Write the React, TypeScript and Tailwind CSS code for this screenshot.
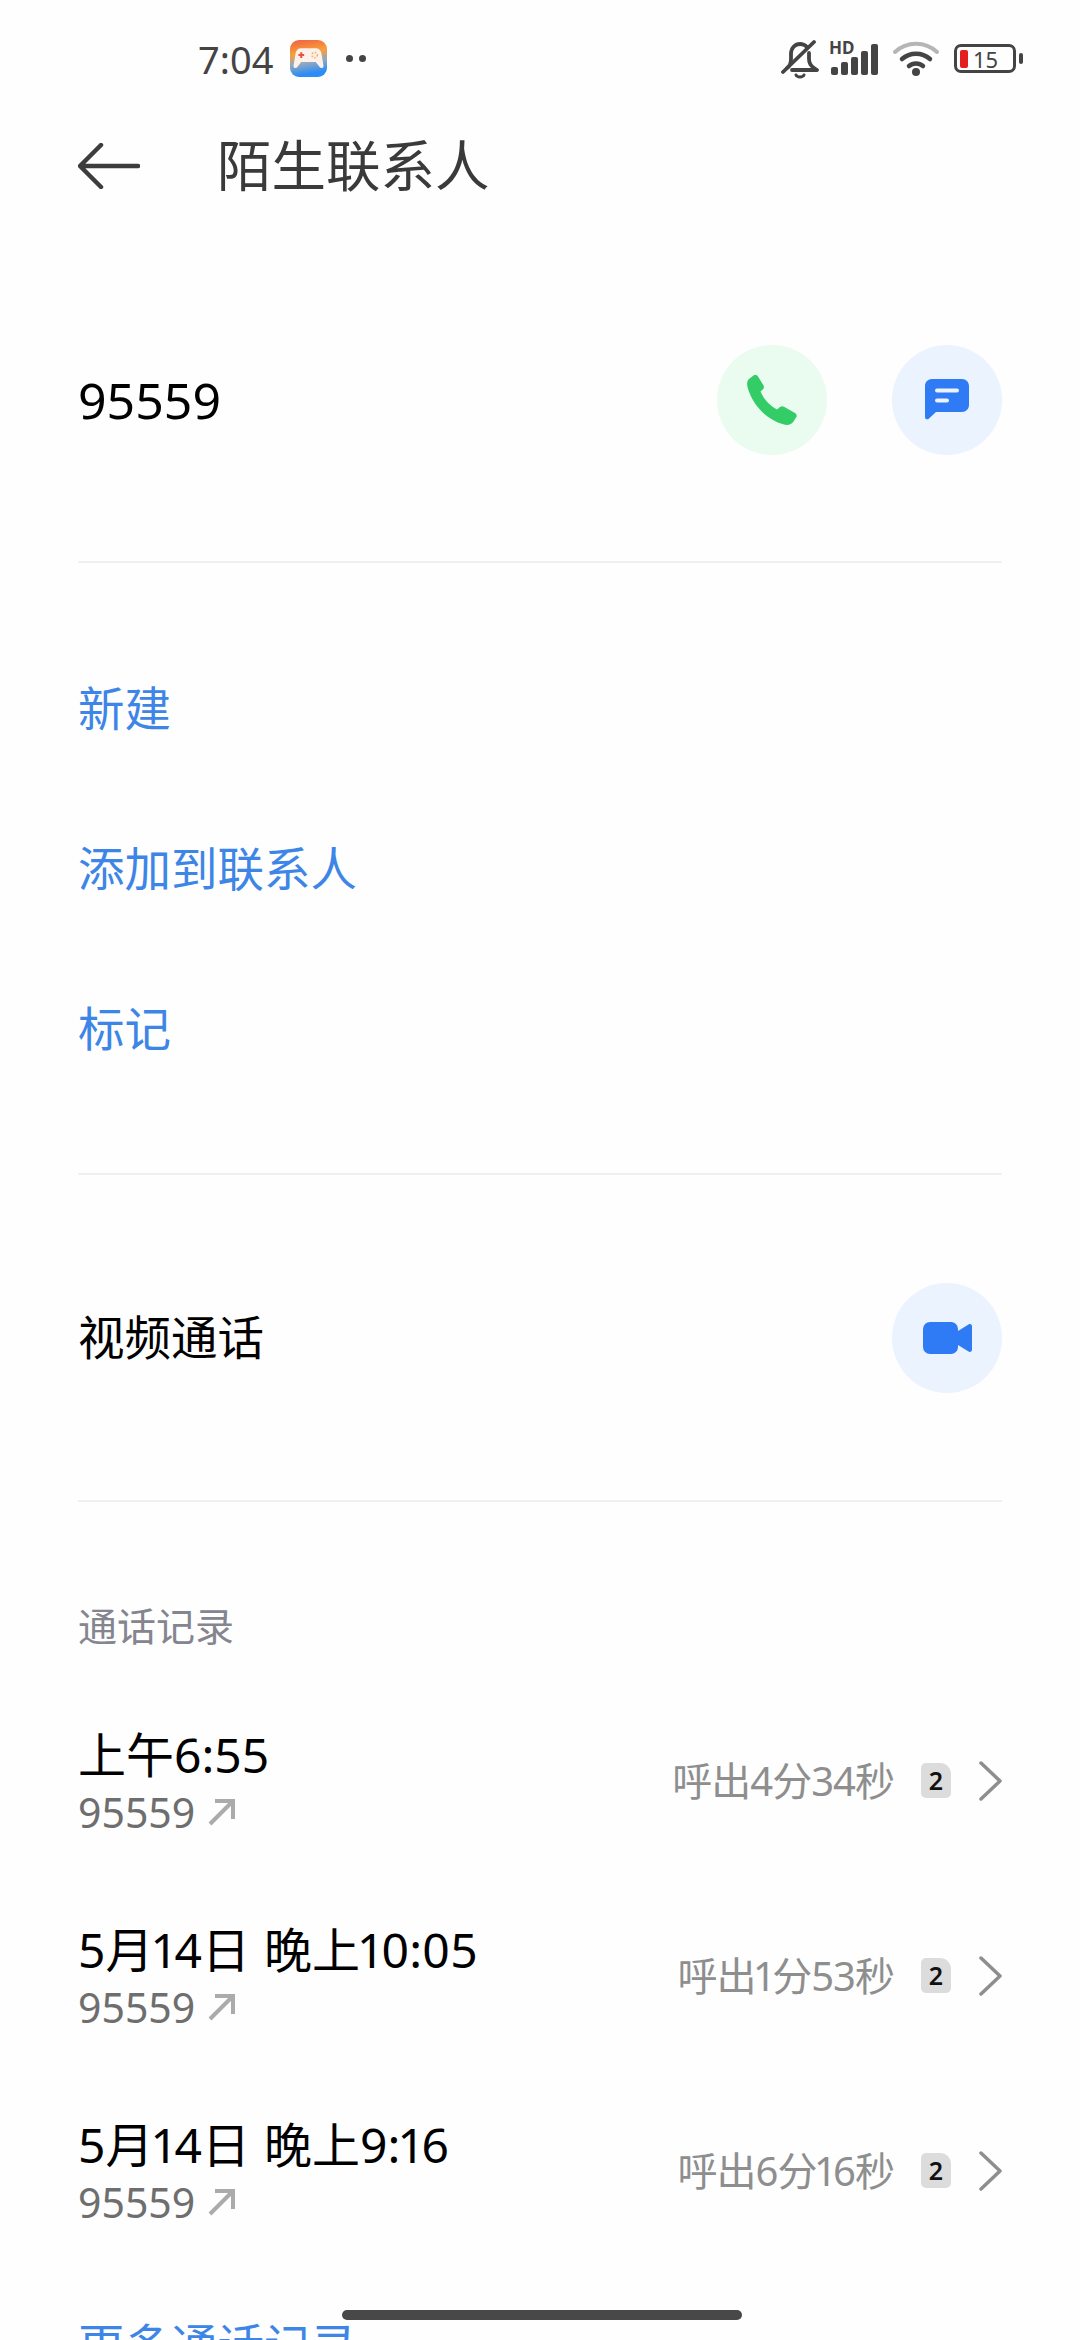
const font = { fontFamily: '"Noto Sans", "Noto Sans CJK SC", sans-serif' };

const calls = [
  { time: '上午6:55', detail: '呼出4分34秒' },
  { time: '5月14日 晚上10:05', detail: '呼出1分53秒' },
  { time: '5月14日 晚上9:16', detail: '呼出6分16秒' },
];

function GameIcon() {
  return (
    <div className="flex h-[37px] w-[37px] items-center justify-center rounded-[9px] bg-[linear-gradient(170deg,#ee5f40_0%,#f9a03c_35%,#8fa8c0_60%,#2b8df5_85%)]">
      <svg width="31" height="25" viewBox="0 0 30 24">
        <path d="M8 2h14c3 0 5 2 5.500 5l2 12c.3 2-2 3-3.500 1.500L22 15.500H8l-4 5C2.500 22 .2 21 .5 19l2-12C3 4 5 2 8 2z" fill="#fdf1ec" />
        <path d="M8 6v5.500M5.200 8.700h5.600" stroke="#e8543f" strokeWidth="2" />
        <circle cx="21" cy="8.700" r="2.600" fill="none" stroke="#f5b45c" strokeWidth="1.600" strokeDasharray="1.500 1.500" />
      </svg>
    </div>
  );
}

function StatusIcons() {
  return (
    <div className="flex items-center">
      <svg width="38" height="40" viewBox="0 0 38 40" fill="none" stroke="#444" strokeWidth="3.800" strokeLinecap="round" strokeLinejoin="round">
        <path d="M6 29c3-2 4-5 4-9v-5c0-6 4-10 9-10 3 0 5 1 7 3M28 14v6c0 4 2 7 5 9l3 2H11" />
        <path d="M2 33 33 3" />
        <path d="M15 36c1 2.500 7 2.500 8 0" strokeWidth="3" />
      </svg>
      <div className="relative ml-[11px] h-[34px] w-[49px]">
        <span className="absolute left-[-1px] top-[-5px] text-[17px] font-bold leading-[22px] text-[#444]">HD</span>
        <svg className="absolute left-0 top-0" width="49" height="34" viewBox="0 0 49 34" fill="#444">
          <rect x="1" y="25" width="7" height="8" rx="2" />
          <rect x="11" y="20" width="7" height="13" rx="2" />
          <rect x="21" y="15" width="7" height="18" rx="2" />
          <rect x="31" y="9" width="7" height="24" rx="2" />
          <rect x="41" y="2" width="7" height="31" rx="2" />
        </svg>
      </div>
      <svg className="ml-[14px]" width="46" height="36" viewBox="0 0 46 36" fill="none" strokeLinecap="round">
        <path d="M2 11c12-11 30-11 42 0" stroke="#b5b5b5" strokeWidth="4" />
        <path d="M9 18c8-7 20-7 28 0" stroke="#444" strokeWidth="4.500" />
        <path d="M16 25c4-3.500 10-3.500 14 0" stroke="#444" strokeWidth="4.500" />
        <circle cx="23" cy="31" r="4" fill="#444" />
      </svg>
      <div className="ml-[15px] flex items-center">
        <div className="flex h-[29px] w-[62px] items-center rounded-[7px] border-[3px] border-[#444] pl-[3px]">
          <div className="h-[18px] w-[8px] rounded-[2px] bg-[#e3201f]" />
          <span className="ml-[5px] text-[22px] leading-none text-[#444]">15</span>
        </div>
        <div className="ml-[3px] h-[11px] w-[4px] rounded-[2px] bg-[#444]" />
      </div>
    </div>
  );
}

function PhoneIcon() {
  return (
    <svg width="50" height="50" viewBox="0 0 50 50">
      <path d="M2 4 6.500.5C8-.3 10 0 11 1.500L16.500 10.500C17.300 12 17 13.500 15.800 14.500L13.500 16.500C16 23 23 31 30 34.500L33 32C34.200 31 35.500 31 37 31.700L48 38C49.800 39 50.200 41 49 42.500L46.500 46.500C44.500 49.500 41 50.500 37 49.500C19 45 5 29 .5 12-.2 9 0 6 2 4Z" fill="#33cc66" />
    </svg>
  );
}

function MessageIcon() {
  return (
    <svg width="44" height="41" viewBox="0 0 44 41">
      <path d="M7 0h30c4 0 7 3 7 7v19c0 4-3 7-7 7H11L4 39.500C2.500 41 0 40.500 0 38V7c0-4 3-7 7-7z" fill="#2f7bf5" />
      <rect x="10" y="9.500" width="24" height="4" rx="2" fill="#ecf3fe" />
      <rect x="10" y="19.500" width="14" height="4" rx="2" fill="#ecf3fe" />
    </svg>
  );
}

function VideoIcon() {
  return (
    <svg width="49" height="32" viewBox="0 0 49 32">
      <rect x="0" y="0" width="35" height="32" rx="7" fill="#2f7bf5" />
      <path d="M35 9 45.500 2.500C47 1.500 49 2.500 49 4v24c0 1.500-2 2.500-3.500 1.500L35 23z" fill="#2f7bf5" />
    </svg>
  );
}

function CircleButton({ tone, children }: { tone: string; children: React.ReactNode }) {
  return (
    <div className={`flex h-[110px] w-[110px] items-center justify-center rounded-full ${tone}`}>
      {children}
    </div>
  );
}

function CallRow({ time, detail }: { time: string; detail: string }) {
  return (
    <div className="flex h-[195px] items-center justify-between">
      <div>
        <div className="text-[48px] leading-[62px] text-black proportional-nums [word-spacing:1.500px]">{time}</div>
        <div className="mt-[1px] flex items-center text-[41px] leading-[50px] text-[#6e6e6e]">
          95559
          <svg className="ml-[12px]" width="30" height="30" viewBox="0 0 30 30" fill="none" stroke="#ababab" strokeWidth="4">
            <path d="M3 27 26 4M8 4h18v18" />
          </svg>
        </div>
      </div>
      <div className="flex items-center">
        <span className="text-[40px] tracking-[-1px] text-[#8e8e8e] proportional-nums">{detail}</span>
        <div className="ml-[27px] flex h-[35px] w-[30px] items-center justify-center rounded-[5px] rounded-tr-[11px] bg-[#dcdcdc] text-[25px] font-semibold text-[#111]">
          2
        </div>
        <svg className="ml-[27px]" width="24" height="40" viewBox="0 0 24 40" fill="none" stroke="#8e8e8e" strokeWidth="3.500" strokeLinecap="round" strokeLinejoin="round">
          <path d="M3 2 22 20 3 38" />
        </svg>
      </div>
    </div>
  );
}

export default function App() {
  return (
    <main style={font} className="relative h-[2340px] w-[1080px] overflow-hidden bg-[#fefefe]">
      <div className="flex h-[118px] items-center justify-between pb-[1px] pl-[198px] pr-[57px]">
        <div className="flex items-center">
          <span className="text-[38px] leading-none text-[#444]">7:04</span>
          <div className="ml-[17px]">
            <GameIcon />
          </div>
          <div className="ml-[19px] flex gap-[6px]">
            <div className="h-[7px] w-[7px] rounded-full bg-[#444]" />
            <div className="h-[7px] w-[7px] rounded-full bg-[#444]" />
          </div>
        </div>
        <StatusIcons />
      </div>

      <header className="flex h-[96px] items-center pl-[78px]">
        <svg width="62" height="46" viewBox="0 0 62 46" fill="none" stroke="#3d3d3d" strokeWidth="4.500" strokeLinecap="round" strokeLinejoin="round">
          <path d="M60 23H3M23 2 2 23l21 21" />
        </svg>
        <h1 className="ml-[77px] pb-[2px] text-[54.500px] font-normal leading-none text-[#3a3a3a]">陌生联系人</h1>
      </header>

      <div className="px-[78px]">
        <section className="flex h-[349px] items-center justify-between border-b-2 border-[#f0f0f0] pt-[24px]">
          <span className="text-[50px] leading-none text-black">95559</span>
          <div className="flex gap-[65px]">
            <CircleButton tone="bg-[#eafbf0]">
              <PhoneIcon />
            </CircleButton>
            <CircleButton tone="bg-[#ebf3fe]">
              <MessageIcon />
            </CircleButton>
          </div>
        </section>

        <section className="flex h-[612px] flex-col justify-center gap-[96px] border-b-2 border-[#f0f0f0] text-[46.500px] leading-[64px] text-[#3d85e6]">
          <div>新建</div>
          <div>添加到联系人</div>
          <div>标记</div>
        </section>

        <section className="flex h-[327px] items-center justify-between border-b-2 border-[#f0f0f0]">
          <span className="text-[46.500px] leading-none text-black">视频通话</span>
          <CircleButton tone="bg-[#ebf3fe]">
            <VideoIcon />
          </CircleButton>
        </section>

        <section>
          <div className="pt-[100px] text-[39px] leading-[48px] text-[#85858f]">通话记录</div>
          <div className="mt-[33px]">
            {calls.map((call) => (
              <CallRow key={call.time} time={call.time} detail={call.detail} />
            ))}
          </div>
          <div className="mt-[45px] text-[46.500px] leading-[64px] text-[#3d85e6]">更多通话记录</div>
        </section>
      </div>

      <div className="absolute bottom-[20px] left-[342px] h-[10px] w-[400px] rounded-full bg-[#484848]" />
    </main>
  );
}
